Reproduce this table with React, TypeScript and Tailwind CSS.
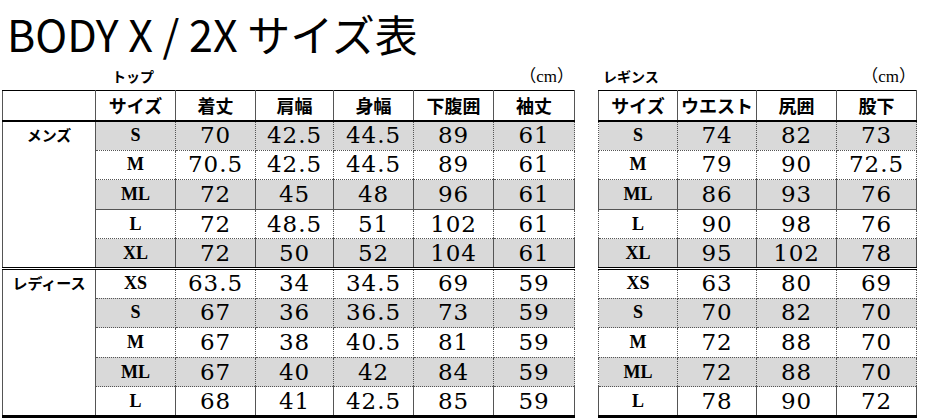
const TOPS_MENS = [
  ["S", "70", "42.5", "44.5", "89", "61"],
  ["M", "70.5", "42.5", "44.5", "89", "61"],
  ["ML", "72", "45", "48", "96", "61"],
  ["L", "72", "48.5", "51", "102", "61"],
  ["XL", "72", "50", "52", "104", "61"],
];
const TOPS_LADIES = [
  ["XS", "63.5", "34", "34.5", "69", "59"],
  ["S", "67", "36", "36.5", "73", "59"],
  ["M", "67", "38", "40.5", "81", "59"],
  ["ML", "67", "40", "42", "84", "59"],
  ["L", "68", "41", "42.5", "85", "59"],
];
const LEG_MENS = [
  ["S", "74", "82", "73"],
  ["M", "79", "90", "72.5"],
  ["ML", "86", "93", "76"],
  ["L", "90", "98", "76"],
  ["XL", "95", "102", "78"],
];
const LEG_LADIES = [
  ["XS", "63", "80", "69"],
  ["S", "70", "82", "70"],
  ["M", "72", "88", "70"],
  ["ML", "72", "88", "70"],
  ["L", "78", "90", "72"],
];

const jp = "font-['Noto_Sans_CJK_JP',sans-serif]";
const num = "font-['DejaVu_Serif','Noto_Sans_CJK_JP',serif]";
const cap = "font-['Liberation_Serif','Noto_Sans_CJK_JP',serif]";

// border style of a body row, picked by group and index
function rowBorder(group: number, i: number) {
  if (i === 4 && group === 0) return "border-b-[3px] border-b-black border-double";
  if (i === 4) return "border-b-[3px] border-b-black border-solid";
  if (group === 0 && i === 2) return "border-b border-b-[#555] border-solid";
  return "border-b border-b-[#555] border-dotted";
}

function BodyRows({ rows, label, group, shadeOdd, withLabel }: {
  rows: string[][]; label: string; group: number; shadeOdd: boolean; withLabel: boolean;
}) {
  return (
    <>
      {rows.map((r, i) => {
        const shaded = shadeOdd ? i % 2 === 1 : i % 2 === 0;
        const bg = shaded ? "bg-[#d9d9d9]" : "bg-white";
        const b = rowBorder(group, i);
        return (
          <tr key={i} className="h-[29.6px]">
            {withLabel && i === 0 && (
              <td rowSpan={5} className={`align-top pt-[2px] text-center text-[15px] font-bold border-l border-dotted border-l-[#555] border-r border-r-[#555] ${group === 0 ? "border-b-[3px] border-b-black border-double" : "border-b-[3px] border-b-black border-solid"} ${jp}`}>
                {label}
              </td>
            )}
            <td className={`${bg} ${b} text-center text-[18px] font-bold border-x border-x-[#555] border-dotted ${cap}`}>{r[0]}</td>
            {r.slice(1).map((v, j) => (
              <td key={j} className={`${bg} ${b} text-center text-[23px] leading-none border-x border-x-[#555] border-dotted ${num} tracking-[0.04em]`}>{v}</td>
            ))}
          </tr>
        );
      })}
    </>
  );
}

function HeaderCell({ children }: { children?: React.ReactNode }) {
  return (
    <th className={`font-bold text-[18px] text-center border-t border-t-black border-solid border-b-2 border-b-black border-x border-x-[#555] ${jp}`}>
      {children}
    </th>
  );
}

export default function App() {
  return (
    <div className="w-[930px] h-[419px] overflow-hidden bg-white text-black">
      <h1 className={`pl-[7px] pt-[8px] h-[66px] text-[43px] leading-[50px] ${jp}`}>
        BODY X / 2X サイズ表
      </h1>
      <div className="flex items-start pl-[2px]">
        <div className="w-[572px]">
          <div className="flex justify-between items-end h-[24px] pb-[3px] text-[14px]">
            <span className={`pl-[110px] font-bold ${jp}`}>トップ</span>
            <span className={`${cap} text-[17px] leading-[20px]`}>（cm）</span>
          </div>
          <table className="w-full border-collapse table-fixed">
            <colgroup>
              <col className="w-[93px]" />
              <col className="w-[80px]" />
              <col className="w-[80px]" />
              <col className="w-[78px]" />
              <col className="w-[80px]" />
              <col className="w-[80px]" />
              <col className="w-[81px]" />
            </colgroup>
            <thead>
              <tr className="h-[30px]">
                <th className="border-t border-t-black border-solid border-b-2 border-b-black border-l border-l-[#555] border-r border-r-[#555]"></th>
                {["サイズ", "着丈", "肩幅", "身幅", "下腹囲", "袖丈"].map((h) => (
                  <HeaderCell key={h}>{h}</HeaderCell>
                ))}
              </tr>
            </thead>
            <tbody>
              <BodyRows rows={TOPS_MENS} label="メンズ" group={0} shadeOdd={false} withLabel />
              <BodyRows rows={TOPS_LADIES} label="レディース" group={1} shadeOdd withLabel />
            </tbody>
          </table>
        </div>
        <div className="w-[318px] ml-[24px]">
          <div className="flex justify-between items-end h-[24px] pb-[3px] text-[14px]">
            <span className={`pl-[5px] font-bold ${jp}`}>レギンス</span>
            <span className={`${cap} text-[17px] leading-[20px]`}>（cm）</span>
          </div>
          <table className="w-full border-collapse table-fixed">
            <colgroup>
              <col className="w-[79px]" />
              <col className="w-[79px]" />
              <col className="w-[80px]" />
              <col className="w-[80px]" />
            </colgroup>
            <thead>
              <tr className="h-[30px]">
                {["サイズ", "ウエスト", "尻囲", "股下"].map((h) => (
                  <HeaderCell key={h}>{h}</HeaderCell>
                ))}
              </tr>
            </thead>
            <tbody>
              <BodyRows rows={LEG_MENS} label="" group={0} shadeOdd={false} withLabel={false} />
              <BodyRows rows={LEG_LADIES} label="" group={1} shadeOdd withLabel={false} />
            </tbody>
          </table>
        </div>
      </div>
    </div>
  );
}
